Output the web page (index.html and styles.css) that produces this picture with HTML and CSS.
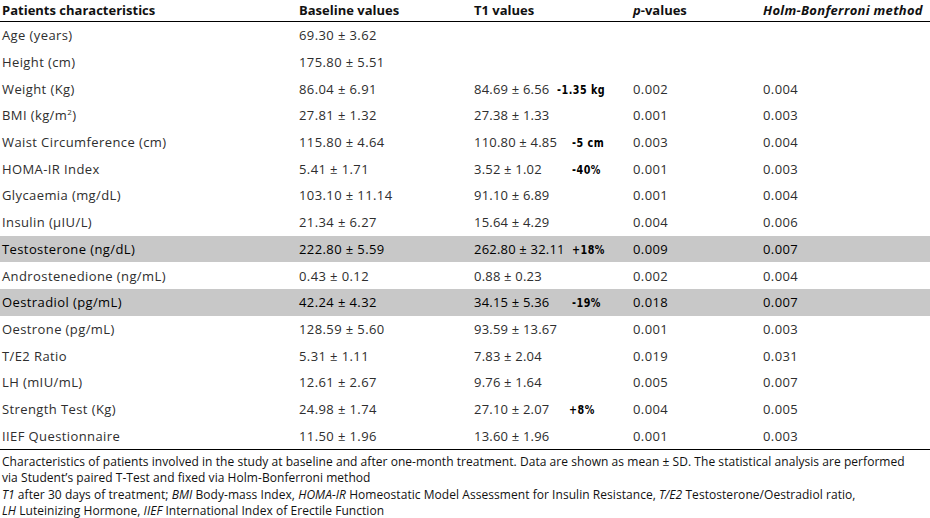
FILE: index.html
```html
<!DOCTYPE html>
<html lang="en">
<head>
<meta charset="utf-8">
<title>Patients characteristics</title>
<link rel="stylesheet" href="styles.css">
</head>
<body>
<div class="table">
  <div class="row head">
    <div class="c1">Patients characteristics</div>
    <div class="c2">Baseline values</div>
    <div class="c3">T1 values</div>
    <div class="c4"></div>
    <div class="c5"><i>p</i>-values</div>
    <div class="c6"><i class="wide">Holm-Bonferroni method</i></div>
  </div>
  <div class="body">
    <div class="row"><div class="c1">Age (years)</div><div class="c2">69.30 ± 3.62</div><div class="c3"></div><div class="c4"></div><div class="c5"></div><div class="c6"></div></div>
    <div class="row"><div class="c1">Height (cm)</div><div class="c2">175.80 ± 5.51</div><div class="c3"></div><div class="c4"></div><div class="c5"></div><div class="c6"></div></div>
    <div class="row"><div class="c1">Weight (Kg)</div><div class="c2">86.04 ± 6.91</div><div class="c3">84.69 ± 6.56</div><div class="c4"><span class="ann">-1.35 kg</span></div><div class="c5">0.002</div><div class="c6">0.004</div></div>
    <div class="row"><div class="c1">BMI (kg/m<sup>2</sup>)</div><div class="c2">27.81 ± 1.32</div><div class="c3">27.38 ± 1.33</div><div class="c4"></div><div class="c5">0.001</div><div class="c6">0.003</div></div>
    <div class="row"><div class="c1">Waist Circumference (cm)</div><div class="c2">115.80 ± 4.64</div><div class="c3">110.80 ± 4.85</div><div class="c4"><span class="ann shift">-5 cm</span></div><div class="c5">0.003</div><div class="c6">0.004</div></div>
    <div class="row"><div class="c1">HOMA-IR Index</div><div class="c2">5.41 ± 1.71</div><div class="c3">3.52 ± 1.02</div><div class="c4"><span class="ann shift">-40%</span></div><div class="c5">0.001</div><div class="c6">0.003</div></div>
    <div class="row"><div class="c1">Glycaemia (mg/dL)</div><div class="c2">103.10 ± 11.14</div><div class="c3">91.10 ± 6.89</div><div class="c4"></div><div class="c5">0.001</div><div class="c6">0.004</div></div>
    <div class="row"><div class="c1">Insulin (μIU/L)</div><div class="c2">21.34 ± 6.27</div><div class="c3">15.64 ± 4.29</div><div class="c4"></div><div class="c5">0.004</div><div class="c6">0.006</div></div>
    <div class="row hl"><div class="c1">Testosterone (ng/dL)</div><div class="c2">222.80 ± 5.59</div><div class="c3">262.80 ± 32.11</div><div class="c4"><span class="ann shift">+18%</span></div><div class="c5">0.009</div><div class="c6">0.007</div></div>
    <div class="row"><div class="c1">Androstenedione (ng/mL)</div><div class="c2">0.43 ± 0.12</div><div class="c3">0.88 ± 0.23</div><div class="c4"></div><div class="c5">0.002</div><div class="c6">0.004</div></div>
    <div class="row hl"><div class="c1">Oestradiol (pg/mL)</div><div class="c2">42.24 ± 4.32</div><div class="c3">34.15 ± 5.36</div><div class="c4"><span class="ann shift">-19%</span></div><div class="c5">0.018</div><div class="c6">0.007</div></div>
    <div class="row"><div class="c1">Oestrone (pg/mL)</div><div class="c2">128.59 ± 5.60</div><div class="c3">93.59 ± 13.67</div><div class="c4"></div><div class="c5">0.001</div><div class="c6">0.003</div></div>
    <div class="row"><div class="c1">T/E2 Ratio</div><div class="c2">5.31 ± 1.11</div><div class="c3">7.83 ± 2.04</div><div class="c4"></div><div class="c5">0.019</div><div class="c6">0.031</div></div>
    <div class="row"><div class="c1">LH (mIU/mL)</div><div class="c2">12.61 ± 2.67</div><div class="c3">9.76 ± 1.64</div><div class="c4"></div><div class="c5">0.005</div><div class="c6">0.007</div></div>
    <div class="row"><div class="c1">Strength Test (Kg)</div><div class="c2">24.98 ± 1.74</div><div class="c3">27.10 ± 2.07</div><div class="c4"><span class="ann shift2">+8%</span></div><div class="c5">0.004</div><div class="c6">0.005</div></div>
    <div class="row"><div class="c1">IIEF Questionnaire</div><div class="c2">11.50 ± 1.96</div><div class="c3">13.60 ± 1.96</div><div class="c4"></div><div class="c5">0.001</div><div class="c6">0.003</div></div>
  </div>
</div>
<div class="caption">
  <p>Characteristics of patients involved in the study at baseline and after one-month treatment. Data are shown as mean ± SD. The statistical analysis are performed<br>via Student’s paired T-Test and fixed via Holm-Bonferroni method</p>
  <p><i>T1</i> after 30 days of treatment; <i>BMI</i> Body-mass Index, <i>HOMA-IR</i> Homeostatic Model Assessment for Insulin Resistance, <i>T/E2</i> Testosterone/Oestradiol ratio,<br><i>LH</i> Luteinizing Hormone, <i>IIEF</i> International Index of Erectile Function</p>
</div>
</body>
</html>
```

FILE: styles.css
```css
html, body {
  margin: 0;
  padding: 0;
  background: #ffffff;
}
body {
  font-family: "Open Sans", "Noto Sans", "Liberation Sans", sans-serif;
  font-size: 13px;
  color: #2e2e2e;
  width: 930px;
  overflow: hidden;
}
.table {
  display: flex;
  flex-direction: column;
}
.row {
  display: grid;
  grid-template-columns: 297px 175px 83px 76px 130px 1fr;
  align-items: center;
  height: 26.7px;
  white-space: nowrap;
  letter-spacing: 0.4px;
}
.row > div {
  padding-left: 2px;
}
.row > .c3 {
  letter-spacing: 0.2px;
}
.head {
  height: 22px;
  align-items: start;
  padding-top: 1px;
  box-sizing: border-box;
  font-weight: bold;
  color: #111;
  letter-spacing: 0;
  border-bottom: 1.5px solid #000;
}
.head > .c3 {
  letter-spacing: 0;
}
.wide {
  letter-spacing: 0.3px;
}
.body {
  border-bottom: 1.5px solid #000;
}
.hl {
  background: #c8c8c8;
  color: #000;
}
sup {
  font-size: 8px;
  line-height: 0;
  vertical-align: 5px;
}
.ann {
  display: inline-block;
  font-family: "DejaVu Sans Condensed", "DejaVu Sans", sans-serif;
  font-stretch: condensed;
  font-weight: bold;
  font-size: 13px;
  color: #000;
  letter-spacing: 0.6px;
  transform: scaleX(0.82);
  transform-origin: left center;
}
.shift { margin-left: 15px; }
.shift2 { margin-left: 12px; }
.caption {
  padding: 4px 2px 0 2px;
  font-size: 12px;
  line-height: 16.3px;
  color: #111;
  white-space: nowrap;
  letter-spacing: 0.05px;
}
.caption p {
  margin: 0;
}
```
